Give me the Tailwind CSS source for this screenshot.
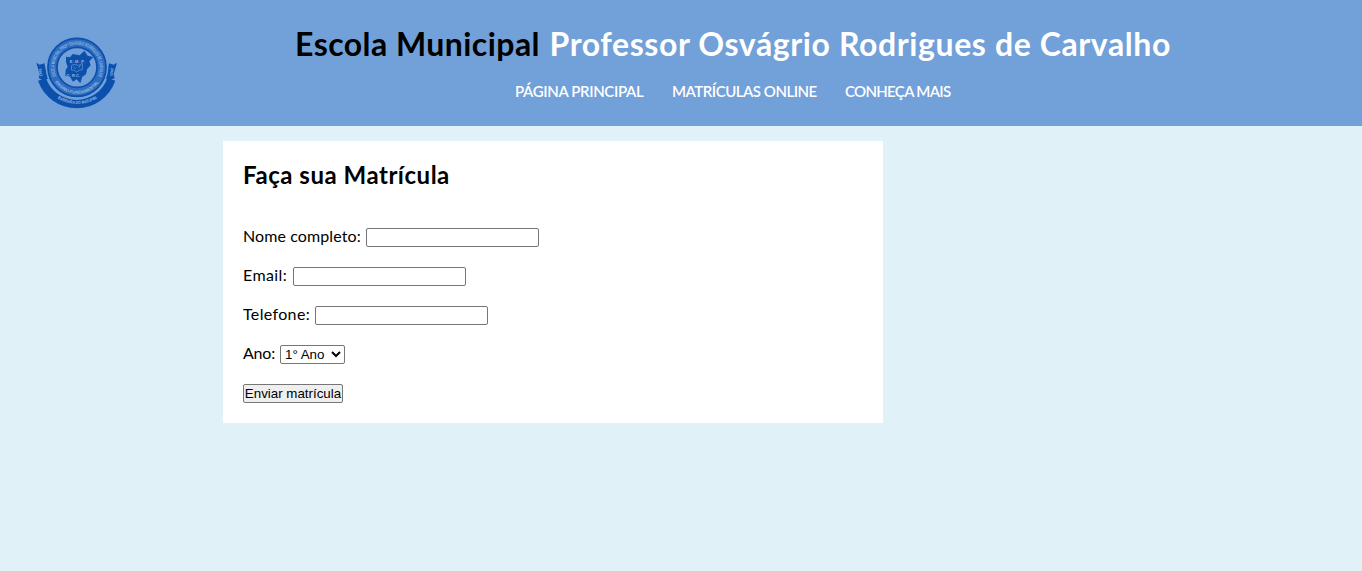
<!DOCTYPE html>
<html lang="pt-BR">
<head>
<meta charset="utf-8">
<title>Faça sua Matrícula</title>
<script src="https://cdn.jsdelivr.net/npm/@tailwindcss/browser@4"></script>
</head>
<body class="min-h-screen bg-[#e0f1f8] font-['Lato',sans-serif] text-black">
<header class="flex h-[126px] bg-[#72a0d9]">
  <svg class="mt-[30px] ml-[30px] h-[85px] w-[95px] shrink-0" viewBox="0 0 285 255" fill="none">
    <path d="M36 148A110 110 0 0 0 244 148" stroke="#0b50ac" stroke-width="25"/>
    <path d="M19 98L29 104L43 100L54 146L39 151L26 144L29 133Z M261 98L251 104L237 100L226 146L241 151L254 144L251 133Z" fill="#0b50ac"/>
    <circle cx="141" cy="112" r="94" fill="#72a0d9"/>
    <circle cx="141" cy="112" r="74" stroke="#2f6ebf" stroke-width="29"/>
    <circle cx="141" cy="112" r="87" stroke="#0b50ac" stroke-width="5"/>
    <circle cx="141" cy="112" r="60" stroke="#0b50ac" stroke-width="5"/>
    <path d="M108 80L120 82L128 72L149 76L163 62L173 77L190 81L178 94L182 106L171 118L168 133L157 140L151 160L140 148L129 155L121 142L106 138L107 119L113 111L108 96Z" fill="#0b50ac"/>
    <path d="M125 106Q136 99 145 107L157 100V119Q147 119 140 126Q134 119 124 120ZM130 111L138 116M151 106L145 114" stroke="#72a0d9" stroke-width="2"/>
    <defs>
      <path id="top" d="M78 138A68 68 0 1 1 204 138"/>
      <path id="low" d="M69 145A79 79 0 0 0 213 145"/>
      <path id="band" d="M61 188A113 113 0 0 0 223 188"/>
    </defs>
    <g font-family="Liberation Sans, sans-serif" font-weight="700" font-size="15" fill="#94b9e6">
      <text><textPath href="#top" textLength="266" lengthAdjust="spacingAndGlyphs">ESCOLA MUNICIPAL PROFº OSVÁGRIO RODRIGUES DE CARVALHO</textPath></text>
      <text font-size="13"><textPath href="#low" startOffset="50%" text-anchor="middle" textLength="156" lengthAdjust="spacingAndGlyphs">ENSINO FUNDAMENTAL</textPath></text>
      <text font-size="13"><textPath href="#band" startOffset="50%" text-anchor="middle" textLength="124" lengthAdjust="spacingAndGlyphs">BARREIRA DO MATUPIRI</textPath></text>
      <text font-size="12" x="119" y="98" textLength="47">E.M.P.</text>
      <text font-size="12" y="140"><tspan x="109">O.</tspan><tspan x="126">R.C.</tspan></text>
      <text font-size="11" transform="translate(37 139) rotate(-97)">1991</text>
      <text font-size="11" transform="translate(243 113) rotate(97)">2021</text>
    </g>
  </svg>
  <div class="ml-[170px] w-[876px] pt-[23px]">
    <h1 class="flex h-[42px] justify-between text-[32px] leading-[42px] font-bold whitespace-nowrap"><span class="tracking-[0.45px]">Escola Municipal</span><span class="tracking-[0.6px] text-white">Professor Osvágrio Rodrigues de Carvalho</span></h1>
    <nav class="mt-[16px] ml-[220px] flex gap-[28px] text-[15px] leading-[21px] font-semibold whitespace-nowrap text-white">
      <a class="w-[129px] tracking-[-0.35px]">PÁGINA PRINCIPAL</a><a class="w-[145px] tracking-[-0.48px]">MATRÍCULAS ONLINE</a><a class="tracking-[-0.68px]">CONHEÇA MAIS</a>
    </nav>
  </div>
</header>
<main class="mt-[15px] ml-[223px] h-[282px] w-[660px] bg-white px-5 pt-5">
  <h2 class="h-[30px] text-[24px] leading-[27px] font-bold tracking-[0.52px]">Faça sua Matrícula</h2>
  <form class="mt-[37px] flex flex-col gap-5 text-[16px] leading-[15px] whitespace-nowrap">
    <label class="flex h-[19px]"><span class="w-[123px] tracking-[0.1px]">Nome completo:</span><input class="h-[19px] w-[173px] rounded-[2px] border border-[#767676] bg-white"></label>
    <label class="flex h-[19px]"><span class="w-[50px] tracking-[0.4px]">Email:</span><input class="h-[19px] w-[173px] rounded-[2px] border border-[#767676] bg-white"></label>
    <label class="flex h-[19px]"><span class="w-[72px] tracking-[0.35px]">Telefone:</span><input class="h-[19px] w-[173px] rounded-[2px] border border-[#767676] bg-white"></label>
    <label class="flex h-[19px]"><span class="w-[37px] tracking-[-0.2px]">Ano:</span><select class="h-[19px] w-[65px] rounded-[2px] border border-[#767676] bg-white font-['Liberation_Sans',sans-serif] text-[13.333px] leading-[15px]"><option>1° Ano</option></select></label>
    <button class="flex h-[19px] w-[100px] items-center justify-center rounded-[2px] border border-[#767676] bg-[#efefef] font-['Liberation_Sans',sans-serif] text-[13.333px] leading-[15px]">Enviar matrícula</button>
  </form>
</main>
</body>
</html>
